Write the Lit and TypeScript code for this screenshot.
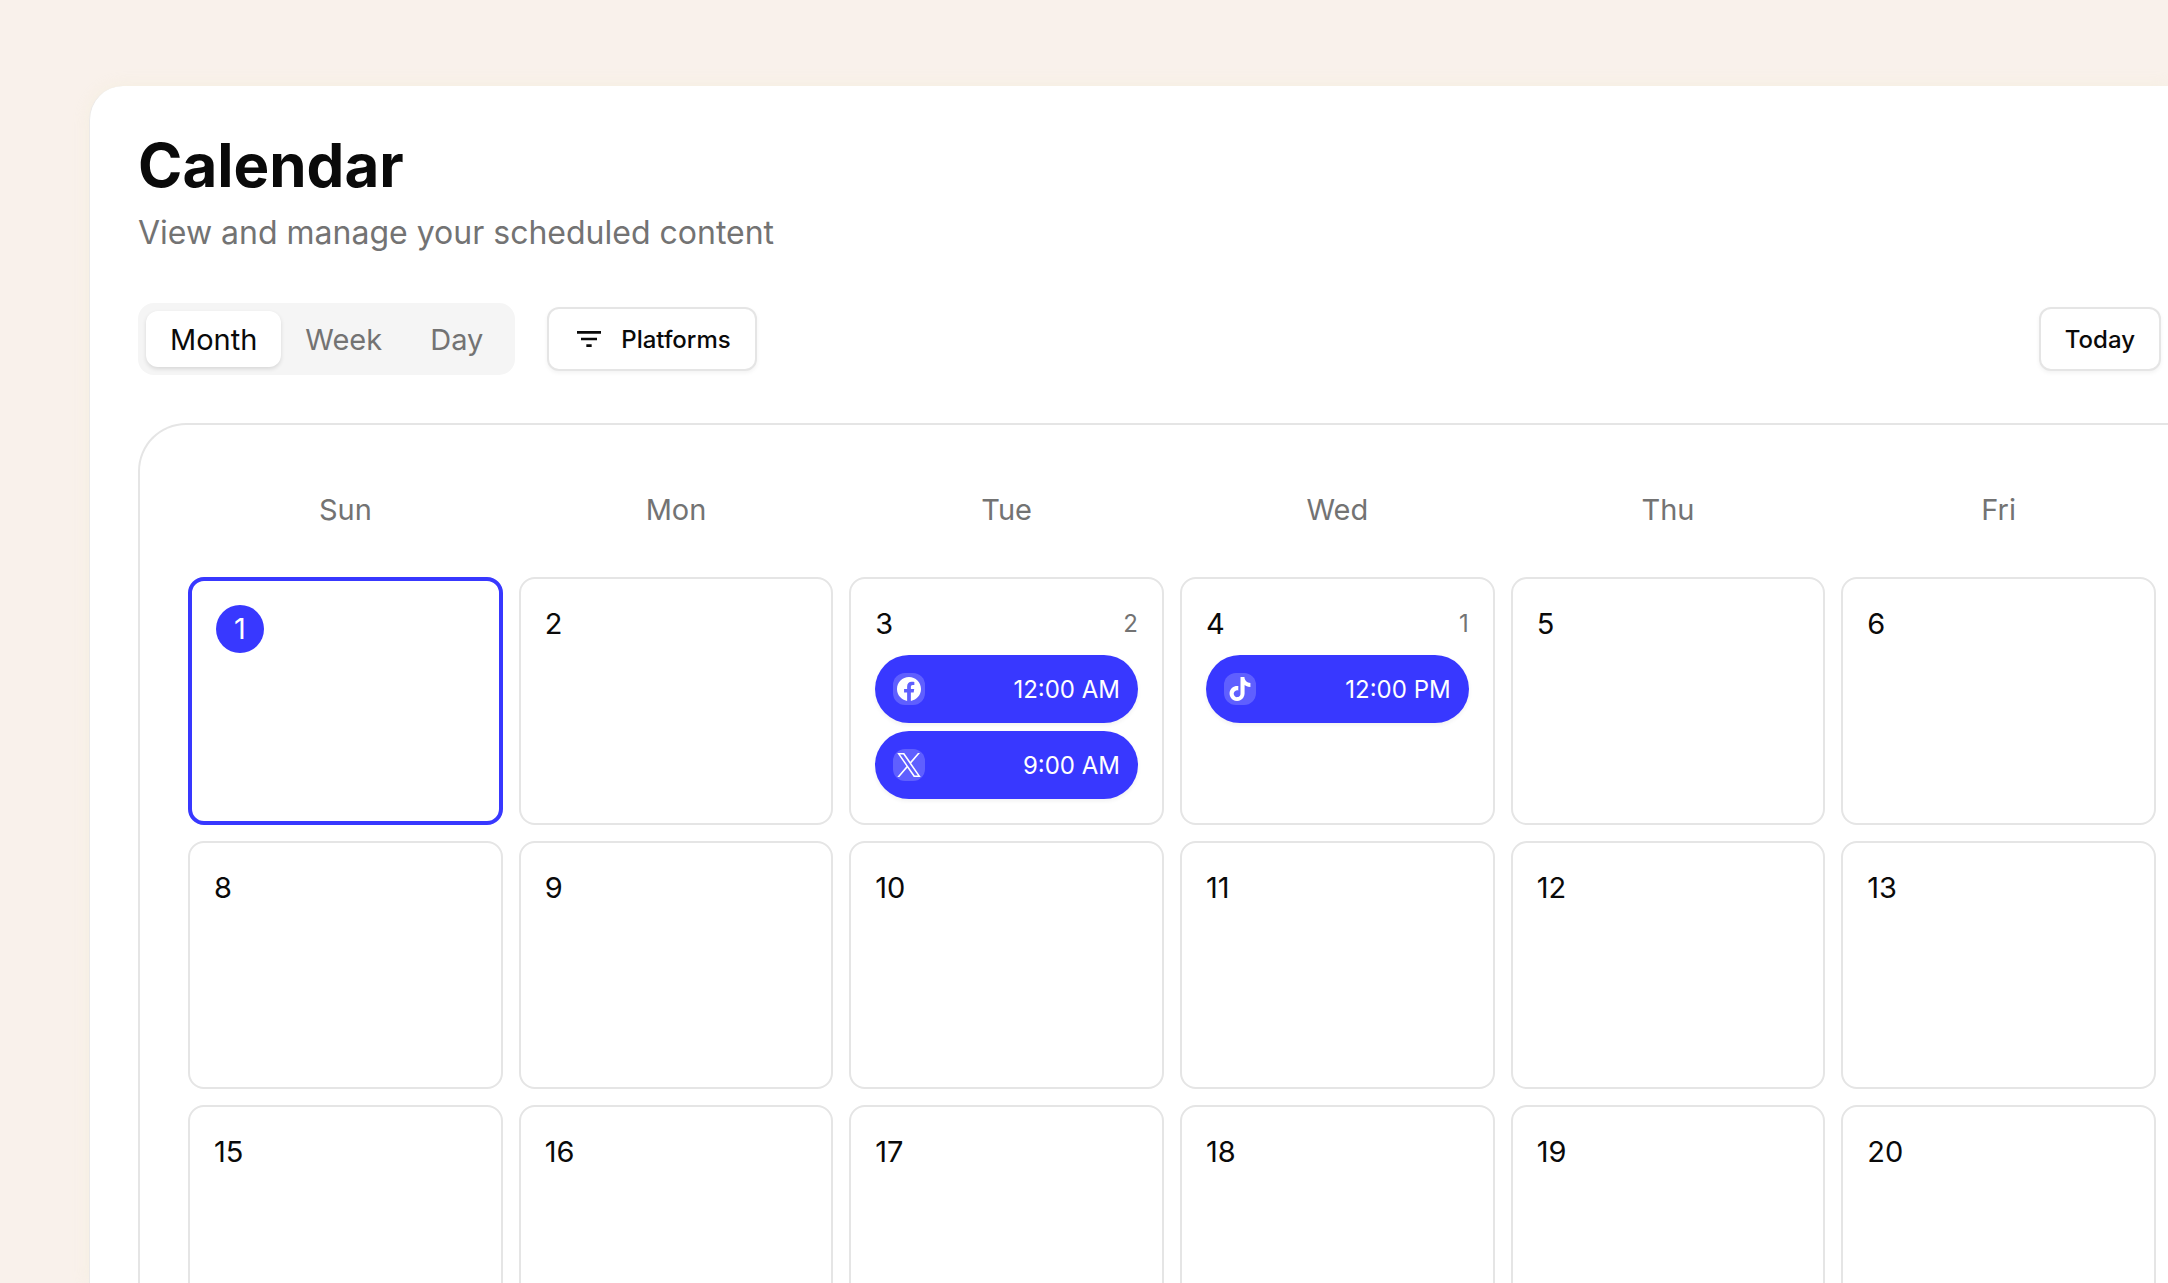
import { LitElement, html, css, svg, nothing } from "lit";
import { customElement, property, state } from "lit/decorators.js";
import { classMap } from "lit/directives/class-map.js";

type Platform = "facebook" | "x" | "tiktok";
interface Post {
  platform: Platform;
  time: string;
}

const icons = {
  facebook: svg`<path d="M24 12.073c0-6.627-5.373-12-12-12s-12 5.373-12 12c0 5.99 4.388 10.954 10.125 11.854v-8.385H7.078v-3.47h3.047V9.43c0-3.007 1.792-4.669 4.533-4.669 1.312 0 2.686.235 2.686.235v2.953H15.83c-1.491 0-1.956.925-1.956 1.874v2.25h3.328l-.532 3.47h-2.796v8.385C19.612 23.027 24 18.062 24 12.073z"/>`,
  x: svg`<path d="M14.234 10.162 22.977 0h-2.072l-7.591 8.824L7.251 0H.258l9.168 13.343L.258 24H2.33l8.016-9.318L16.749 24h6.993zm-2.837 3.299-.929-1.329L3.076 1.56h3.182l5.965 8.532.929 1.329 7.754 11.09h-3.182z"/>`,
  tiktok: svg`<path d="M12.525.02c1.31-.02 2.61-.01 3.91-.02.08 1.53.63 3.09 1.75 4.17 1.12 1.11 2.7 1.62 4.24 1.79v4.03c-1.44-.05-2.89-.35-4.2-.97-.57-.26-1.1-.59-1.62-.93-.01 2.92.01 5.84-.02 8.75-.08 1.4-.54 2.79-1.35 3.94-1.31 1.92-3.58 3.17-5.91 3.21-1.43.08-2.86-.31-4.08-1.03-2.02-1.19-3.44-3.37-3.65-5.71-.02-.5-.03-1-.01-1.49.18-1.9 1.12-3.72 2.58-4.96 1.66-1.44 3.98-2.13 6.15-1.72.02 1.48-.04 2.96-.04 4.44-.99-.32-2.15-.23-3.02.37-.63.41-1.11 1.04-1.36 1.75-.21.51-.15 1.07-.14 1.61.24 1.64 1.82 3.02 3.5 2.87 1.12-.01 2.19-.66 2.77-1.61.19-.33.4-.67.41-1.06.1-1.79.06-3.57.07-5.36.01-4.03-.01-8.05.02-12.07z"/>`,
};

@customElement("calendar-post")
export class CalendarPost extends LitElement {
  @property() platform: Platform = "facebook";
  @property() time = "";

  static styles = css`
    :host {
      display: block;
    }
    .post {
      box-sizing: border-box;
      display: flex;
      align-items: center;
      justify-content: space-between;
      width: 100%;
      height: 68px;
      padding: 0 18px;
      border: 0;
      border-radius: 34px;
      background: #3838ff;
      color: #fff;
      font: inherit;
      font-size: 24px;
      box-shadow: 0 2px 4px rgb(0 0 0 / 6%);
      cursor: pointer;
    }
    .badge {
      display: flex;
      align-items: center;
      justify-content: center;
      width: 32px;
      height: 32px;
      border-radius: 12px;
      background: rgb(255 255 255 / 20%);
    }
    .time {
      padding-top: 2px;
    }
    .logo {
      width: 24px;
      height: 24px;
      fill: #fff;
    }
  `;

  render() {
    return html`<button class="post" type="button">
      <span class="badge"><svg class="logo" viewBox="0 0 24 24" aria-hidden="true">${icons[this.platform]}</svg></span>
      <span class="time">${this.time}</span>
    </button>`;
  }
}

@customElement("app-root")
export class AppRoot extends LitElement {
  @state() private view = "Month";

  private views = ["Month", "Week", "Day"];
  private weekdays = ["Sun", "Mon", "Tue", "Wed", "Thu", "Fri"];
  private weeks = [
    [1, 2, 3, 4, 5, 6],
    [8, 9, 10, 11, 12, 13],
    [15, 16, 17, 18, 19, 20],
  ];
  private today = 1;
  private posts: Record<number, Post[]> = {
    3: [
      { platform: "facebook", time: "12:00 AM" },
      { platform: "x", time: "9:00 AM" },
    ],
    4: [{ platform: "tiktok", time: "12:00 PM" }],
  };

  static styles = css`
    :host {
      display: flex;
      box-sizing: border-box;
      height: 100vh;
      padding: 86px 0 0 89px;
      overflow: hidden;
      background: #f9f1eb;
      color: #0a0a0a;
      font-family: Inter, "Liberation Sans", sans-serif;
      font-size: 29px;
      line-height: 42px;
    }
    .card {
      flex: 1;
      min-width: 0;
      padding: 47px 0 0 48px;
      border-left: 1px solid #ebe9e8;
      border-top-left-radius: 34px;
      background: #fff;
      box-shadow: 0 0 16px rgb(240 236 200 / 30%);
    }
    .title {
      margin: 0;
      font-size: 60px;
      line-height: 64px;
      font-weight: 700;
    }
    .subtitle {
      margin: 12px 0 46px;
      color: #737373;
      font-size: 32px;
      line-height: 48px;
    }
    .toolbar {
      display: flex;
      align-items: center;
      gap: 32px;
      margin-bottom: 48px;
      padding-right: 7px;
    }
    .views {
      display: flex;
      padding: 8px;
      border-radius: 16px;
      background: #f5f5f5;
    }
    .view {
      box-sizing: border-box;
      height: 56px;
      padding: 2px 24px 0;
      border: 0;
      border-radius: 12px;
      background: none;
      color: #737373;
      font: inherit;
      cursor: pointer;
    }
    .view.active {
      background: #fff;
      color: #0a0a0a;
      box-shadow: 0 2px 4px rgb(0 0 0 / 12%);
    }
    .action {
      box-sizing: border-box;
      display: flex;
      align-items: center;
      gap: 16px;
      height: 64px;
      padding: 0 24px;
      border: 2px solid #e5e5e5;
      border-radius: 12px;
      background: #fff;
      color: #0a0a0a;
      font: inherit;
      font-size: 24px;
      font-weight: 500;
      box-shadow: 0 2px 4px rgb(0 0 0 / 5%);
      cursor: pointer;
    }
    .action.today {
      margin-left: auto;
    }
    .label {
      padding-top: 2px;
    }
    .filter {
      width: 32px;
      height: 32px;
      fill: currentColor;
    }
    .frame {
      padding: 48px 12px 48px 48px;
      border: 2px solid #e5e5e5;
      border-right: 0;
      border-top-left-radius: 48px;
    }
    .month,
    .head {
      display: block;
    }
    .weeks {
      display: grid;
      gap: 16px;
    }
    .head {
      margin-bottom: 30px;
    }
    .week {
      display: grid;
      grid-template-columns: repeat(6, minmax(0, 1fr));
      gap: 16px;
    }
    .weekday {
      padding: 16px 0;
      color: #737373;
      font-weight: 400;
    }
    .day {
      box-sizing: border-box;
      min-height: 248px;
      padding: 24px;
      border: 2px solid #e5e5e5;
      border-radius: 16px;
    }
    .day.current {
      border: 4px solid #3838ff;
    }
    .top {
      display: flex;
      align-items: center;
      justify-content: space-between;
    }
    .current .number {
      width: 48px;
      border-radius: 24px;
      background: #3838ff;
      color: #fff;
      line-height: 48px;
      text-align: center;
    }
    .count {
      color: #737373;
      font-size: 24px;
    }
    .posts {
      display: grid;
      gap: 8px;
      margin-top: 10px;
    }
  `;

  private renderDay(day: number) {
    const posts = this.posts[day];
    return html`<td class=${classMap({ day: true, current: day === this.today })}>
      <div class="top">
        <span class="number">${day}</span>
        ${posts ? html`<span class="count">${posts.length}</span>` : nothing}
      </div>
      ${posts
        ? html`<div class="posts">
            ${posts.map((p) => html`<calendar-post .platform=${p.platform} .time=${p.time}></calendar-post>`)}
          </div>`
        : nothing}
    </td>`;
  }

  render() {
    return html`<main class="card">
      <h1 class="title">Calendar</h1>
      <p class="subtitle">View and manage your scheduled content</p>
      <div class="toolbar">
        <div class="views">
          ${this.views.map(
            (v) => html`<button
              type="button"
              class=${classMap({ view: true, active: v === this.view })}
              aria-pressed=${v === this.view ? "true" : "false"}
              @click=${() => (this.view = v)}
            >${v}</button>`
          )}
        </div>
        <button class="action" type="button">
          <svg class="filter" viewBox="0 0 24 24" aria-hidden="true">
            <path d="M10 18h4v-2h-4v2zM3 6v2h18V6H3zm3 7h12v-2H6v2z" />
          </svg>
          <span class="label">Platforms</span>
        </button>
        <button class="action today" type="button"><span class="label">Today</span></button>
      </div>
      <div class="frame">
        <table class="month">
          <thead class="head">
            <tr class="week">
              ${this.weekdays.map((d) => html`<th class="weekday" scope="col">${d}</th>`)}
            </tr>
          </thead>
          <tbody class="weeks">
            ${this.weeks.map((w) => html`<tr class="week">${w.map((d) => this.renderDay(d))}</tr>`)}
          </tbody>
        </table>
      </div>
    </main>`;
  }
}
